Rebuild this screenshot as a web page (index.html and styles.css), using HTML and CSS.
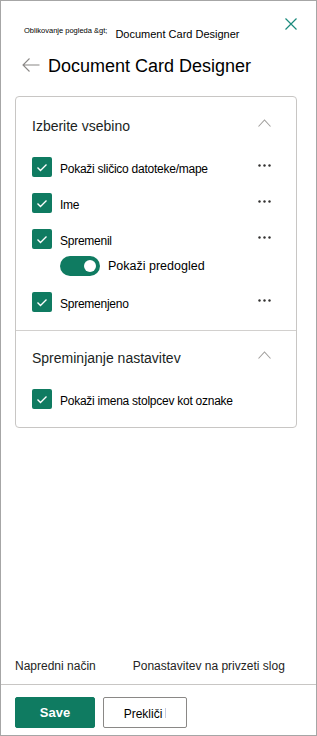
FILE: index.html
```html
<!DOCTYPE html>
<html lang="sl">
<head>
<meta charset="utf-8">
<title>Document Card Designer</title>
<link rel="stylesheet" href="styles.css">
</head>
<body>
<div class="panel">
  <div class="top">
    <div class="crumbs">
      <span class="crumb-small">Oblikovanje pogleda &amp;gt;</span>
      <span class="crumb-large">Document Card Designer</span>
    </div>
    <svg class="close" width="12" height="12" viewBox="0 0 12 12"><path d="M0.5 0.5 L11.5 11.5 M11.5 0.5 L0.5 11.5" stroke="#1a8a7c" stroke-width="1.2" fill="none"/></svg>
  </div>
  <div class="title-row">
    <svg class="back" width="18" height="14" viewBox="0 0 18 14"><path d="M17.5 7 H1 M7.5 0.5 L1 7 L7.5 13.5" stroke="#8a8886" stroke-width="1.1" fill="none"/></svg>
    <h1 class="title">Document Card Designer</h1>
  </div>

  <div class="card">
    <section class="section first">
      <div class="sec-head">
        <span class="sec-title">Izberite vsebino</span>
        <svg class="chev" width="13" height="8" viewBox="0 0 13 8"><path d="M0.5 7.5 L6.5 1 L12.5 7.5" stroke="#a19f9d" stroke-width="1.1" fill="none"/></svg>
      </div>
      <div class="rows">
        <div class="row">
          <span class="cb"><svg width="20" height="20" viewBox="0 0 20 20"><path d="M5.5 10.5 L8.5 13.5 L14.5 7.5" stroke="#fff" stroke-width="1.4" fill="none"/></svg></span>
          <span class="label">Pokaži sličico datoteke/mape</span>
          <svg class="dots" width="13" height="3" viewBox="0 0 13 3"><circle cx="1.5" cy="1.5" r="1.2" fill="#323130"/><circle cx="6.5" cy="1.5" r="1.2" fill="#323130"/><circle cx="11.5" cy="1.5" r="1.2" fill="#323130"/></svg>
        </div>
        <div class="row">
          <span class="cb"><svg width="20" height="20" viewBox="0 0 20 20"><path d="M5.5 10.5 L8.5 13.5 L14.5 7.5" stroke="#fff" stroke-width="1.4" fill="none"/></svg></span>
          <span class="label">Ime</span>
          <svg class="dots" width="13" height="3" viewBox="0 0 13 3"><circle cx="1.5" cy="1.5" r="1.2" fill="#323130"/><circle cx="6.5" cy="1.5" r="1.2" fill="#323130"/><circle cx="11.5" cy="1.5" r="1.2" fill="#323130"/></svg>
        </div>
        <div class="row">
          <span class="cb"><svg width="20" height="20" viewBox="0 0 20 20"><path d="M5.5 10.5 L8.5 13.5 L14.5 7.5" stroke="#fff" stroke-width="1.4" fill="none"/></svg></span>
          <span class="label">Spremenil</span>
          <svg class="dots" width="13" height="3" viewBox="0 0 13 3"><circle cx="1.5" cy="1.5" r="1.2" fill="#323130"/><circle cx="6.5" cy="1.5" r="1.2" fill="#323130"/><circle cx="11.5" cy="1.5" r="1.2" fill="#323130"/></svg>
        </div>
        <div class="toggle-row">
          <span class="toggle"><span class="knob"></span></span>
          <span class="toggle-label">Pokaži predogled</span>
        </div>
        <div class="row">
          <span class="cb"><svg width="20" height="20" viewBox="0 0 20 20"><path d="M5.5 10.5 L8.5 13.5 L14.5 7.5" stroke="#fff" stroke-width="1.4" fill="none"/></svg></span>
          <span class="label">Spremenjeno</span>
          <svg class="dots" width="13" height="3" viewBox="0 0 13 3"><circle cx="1.5" cy="1.5" r="1.2" fill="#323130"/><circle cx="6.5" cy="1.5" r="1.2" fill="#323130"/><circle cx="11.5" cy="1.5" r="1.2" fill="#323130"/></svg>
        </div>
      </div>
    </section>
    <section class="section divided">
      <div class="sec-head">
        <span class="sec-title">Spreminjanje nastavitev</span>
        <svg class="chev" width="13" height="8" viewBox="0 0 13 8"><path d="M0.5 7.5 L6.5 1 L12.5 7.5" stroke="#a19f9d" stroke-width="1.1" fill="none"/></svg>
      </div>
      <div class="rows">
        <div class="row">
          <span class="cb"><svg width="20" height="20" viewBox="0 0 20 20"><path d="M5.5 10.5 L8.5 13.5 L14.5 7.5" stroke="#fff" stroke-width="1.4" fill="none"/></svg></span>
          <span class="label">Pokaži imena stolpcev kot oznake</span>
        </div>
      </div>
    </section>
  </div>

  <div class="spacer"></div>

  <div class="links">
    <span class="link">Napredni način</span>
    <span class="link">Ponastavitev na privzeti slog</span>
  </div>
  <div class="actions">
    <button class="btn primary">Save</button>
    <button class="btn secondary">Prekliči<span class="caret"></span></button>
  </div>
</div>
</body>
</html>
```

FILE: styles.css
```css
* { box-sizing: border-box; }
html, body { margin: 0; padding: 0; background: #fff; }
body { font-family: "Liberation Sans", Arial, sans-serif; color: #201f1e; }

.panel {
  width: 317px;
  height: 736px;
  border: 1px solid #a6a6a6;
  display: flex;
  flex-direction: column;
  background: #fff;
}

.top {
  height: 41px;
  padding: 17px 19px 0 23px;
  display: flex;
  align-items: flex-start;
}
.crumbs { display: flex; align-items: flex-start; }
.crumb-small { font-size: 7.5px; line-height: 9px; margin-top: 8px; color: #000; }
.crumb-large { font-size: 11px; line-height: 14px; margin-top: 9px; margin-left: 8px; color: #000; }
.close { margin-left: auto; display: block; }

.title-row {
  height: 24px;
  margin-top: 12px;
  padding-left: 21px;
  display: flex;
  align-items: center;
}
.back { display: block; margin-right: 8px; margin-top: -2px; }
.title { margin: 0; font-size: 18px; line-height: 24px; font-weight: normal; color: #000; }

.card {
  margin: 18px 19px 0 14px;
  border: 1px solid #c8c6c4;
  border-radius: 4px;
}
.section { padding: 19px 25px 18px 16px; }
.section.divided { border-top: 1px solid #d2d0ce; padding-top: 17px; }

.sec-head { height: 20px; display: flex; align-items: center; }
.sec-title { font-size: 14px; line-height: 20px; color: #201f1e; }
.chev { margin-left: auto; display: block; margin-top: -6px; }

.rows { margin-top: 21px; display: flex; flex-direction: column; gap: 16px; }
.row { height: 20px; display: flex; align-items: center; }
.cb {
  width: 20px; height: 20px;
  background: #0f7b61;
  border-radius: 2px;
  flex: none;
}
.cb svg { display: block; }
.label { margin-left: 8px; font-size: 12px; letter-spacing: -0.25px; color: #000; line-height: 20px; padding-top: 3px; }
.dots { margin-left: auto; align-self: flex-start; margin-top: 7px; display: block; }

.toggle-row { height: 20px; margin-top: -9px; padding-left: 28px; display: flex; align-items: center; }
.toggle {
  width: 40px; height: 20px;
  border-radius: 10px;
  background: #0f7b61;
  display: flex;
  align-items: center;
  justify-content: flex-end;
  padding-right: 4px;
}
.knob { width: 12px; height: 12px; border-radius: 50%; background: #fff; }
.toggle-label { margin-left: 8px; font-size: 12.5px; color: #000; }

.spacer { flex: 1; }

.links {
  height: 20px;
  margin-bottom: 8px;
  padding-left: 14px;
  display: flex;
  align-items: center;
  gap: 37px;
}
.link { font-size: 12px; color: #252423; }

.actions {
  border-top: 1px solid #c8c6c4;
  padding: 12px 0 7px 14px;
  display: flex;
  gap: 8px;
}
.btn {
  height: 31px;
  border-radius: 2px;
  font-family: "Liberation Sans", Arial, sans-serif;
  padding: 0;
  display: flex;
  align-items: center;
  justify-content: center;
}
.primary { width: 80px; background: #0f7b61; border: 1px solid #0f7b61; color: #fff; font-weight: bold; font-size: 13px; }
.secondary { width: 84px; background: #fff; border: 1px solid #8a8886; color: #000; font-size: 12px; padding-top: 2px; }
.caret { display: inline-block; width: 1px; height: 10px; background: #c5cbe0; margin-left: 3px; margin-top: -1px; }
```
